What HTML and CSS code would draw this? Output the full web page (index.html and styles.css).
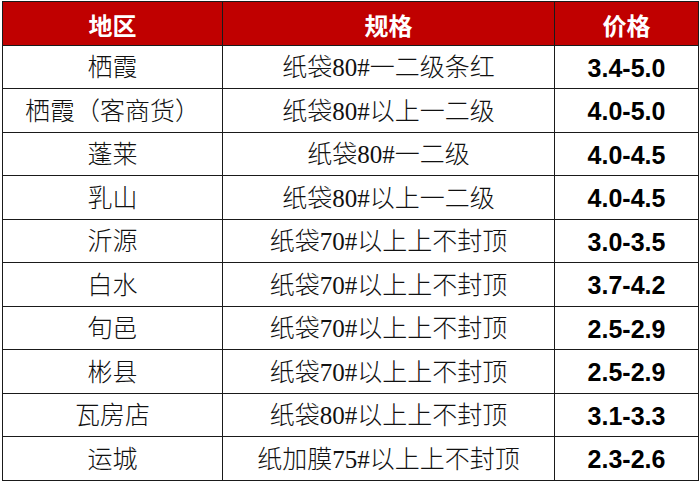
FILE: index.html
```html
<!DOCTYPE html>
<html lang="zh-CN">
<head>
<meta charset="utf-8">
<link rel="stylesheet" href="styles.css">
</head>
<body>
<table class="price-table">
  <colgroup>
    <col class="col-area">
    <col class="col-spec">
    <col class="col-price">
  </colgroup>
  <thead>
    <tr><th>地区</th><th>规格</th><th>价格</th></tr>
  </thead>
  <tbody>
    <tr><td>栖霞</td><td>纸袋80#一二级条红</td><td class="price">3.4-5.0</td></tr>
    <tr><td>栖霞（客商货）</td><td>纸袋80#以上一二级</td><td class="price">4.0-5.0</td></tr>
    <tr><td>蓬莱</td><td>纸袋80#一二级</td><td class="price">4.0-4.5</td></tr>
    <tr><td>乳山</td><td>纸袋80#以上一二级</td><td class="price">4.0-4.5</td></tr>
    <tr><td>沂源</td><td>纸袋70#以上上不封顶</td><td class="price">3.0-3.5</td></tr>
    <tr><td>白水</td><td>纸袋70#以上上不封顶</td><td class="price">3.7-4.2</td></tr>
    <tr><td>旬邑</td><td>纸袋70#以上上不封顶</td><td class="price">2.5-2.9</td></tr>
    <tr><td>彬县</td><td>纸袋70#以上上不封顶</td><td class="price">2.5-2.9</td></tr>
    <tr><td>瓦房店</td><td>纸袋80#以上上不封顶</td><td class="price">3.1-3.3</td></tr>
    <tr><td>运城</td><td>纸加膜75#以上上不封顶</td><td class="price">2.3-2.6</td></tr>
  </tbody>
</table>
</body>
</html>
```

FILE: styles.css
```css
html, body {
  margin: 0;
  padding: 0;
  background: #ffffff;
}

.price-table {
  margin: 1px 0 0 2px;
  width: 696px;
  border-collapse: collapse;
  table-layout: fixed;
  font-family: "Liberation Serif", "Noto Sans CJK SC", serif;
  font-size: 25px;
  color: #111111;
}

.col-area { width: 220px; }
.col-spec { width: 332px; }
.col-price { width: 144px; }

.price-table th,
.price-table td {
  border: 1.5px solid #1a1a1a;
  text-align: center;
  vertical-align: middle;
  padding: 0;
  line-height: 1;
  white-space: nowrap;
}

.price-table tr {
  height: 43.5px;
}

.price-table th {
  background: #c00000;
  color: #ffffff;
  font-family: "Noto Sans CJK SC", sans-serif;
  font-weight: 700;
  font-size: 24px;
  padding-top: 3px;
}

.price-table td {
  font-weight: 300;
  padding-top: 2px;
}

.price-table td.price {
  font-family: "Liberation Sans", Arial, sans-serif;
  font-weight: 700;
  font-size: 25px;
  letter-spacing: 0;
  color: #000000;
  padding-top: 3px;
}
```
